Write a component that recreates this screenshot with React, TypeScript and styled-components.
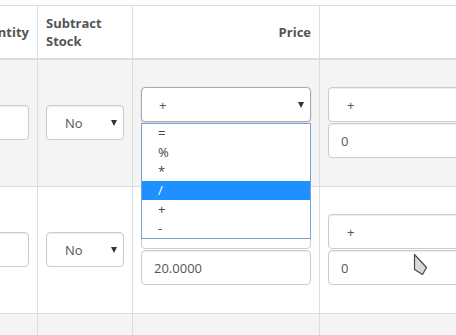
import React from "react";
import styled, { createGlobalStyle } from "styled-components";

const GlobalStyle = createGlobalStyle`
	html, body {
		margin: 0;
		padding: 0;
		background: #fff;
		overflow: hidden;
	}
	body {
		font-family: "Open Sans", "Liberation Sans", sans-serif;
		font-size: 13px;
		color: #555;
	}
`;

const operators = ["=", "%", "*", "/", "+", "-"];

interface OptionRow {
	subtract: string;
	pricePrefix: string;
	price: string;
	pointsPrefix: string;
	points: string;
}

const rows: OptionRow[] = [
	{ subtract: "No", pricePrefix: "+", price: "", pointsPrefix: "+", points: "0" },
	{ subtract: "No", pricePrefix: "+", price: "20.0000", pointsPrefix: "+", points: "0" },
	{ subtract: "No", pricePrefix: "+", price: "", pointsPrefix: "+", points: "0" },
];

const App = () => {
	return (
		<>
			<GlobalStyle />
			<Viewport>
				<Table>
					<colgroup>
						<col style={{ width: 97 }} />
						<col style={{ width: 95 }} />
						<col style={{ width: 187 }} />
						<col style={{ width: 200 }} />
						<col style={{ width: 200 }} />
					</colgroup>
					<thead>
						<tr>
							<HeadCell align="right">Quantity</HeadCell>
							<HeadCell align="left">
								Subtract
								<br />
								Stock
							</HeadCell>
							<HeadCell align="right">Price</HeadCell>
							<HeadCell align="right">Points</HeadCell>
							<HeadCell align="right">Weight</HeadCell>
						</tr>
					</thead>
					<tbody>
						{rows.map((row, i) => (
							<BodyRow key={i} striped={i % 2 === 0}>
								<Cell>
									<TextInput />
								</Cell>
								<Cell>
									<Select>
										<SelectValue indent={19}>{row.subtract}</SelectValue>
										<Caret />
									</Select>
								</Cell>
								<Cell>
									<Stack>
										<SelectWrap>
											<Select open={i === 0}>
												<SelectValue indent={18}>{row.pricePrefix}</SelectValue>
												<Caret />
											</Select>
											{i === 0 && (
												<Dropdown>
													{operators.map((op) => (
														<Option key={op} active={op === "/"}>
															{op}
														</Option>
													))}
												</Dropdown>
											)}
										</SelectWrap>
										<TextInput>{row.price}</TextInput>
									</Stack>
								</Cell>
								<Cell>
									<Stack>
										<Select>
											<SelectValue indent={19}>{row.pointsPrefix}</SelectValue>
											<Caret />
										</Select>
										<TextInput>{row.points}</TextInput>
									</Stack>
								</Cell>
								<Cell>
									<Stack>
										<Select>
											<SelectValue indent={19}>+</SelectValue>
											<Caret />
										</Select>
										<TextInput>0.00000000</TextInput>
									</Stack>
								</Cell>
							</BodyRow>
						))}
					</tbody>
				</Table>
				<Cursor width="16" height="24" viewBox="0 0 16 24">
					<path
						d="M1.5 1.5 L1.5 16.5 L9.5 21.5 L13.5 14.5 Z"
						fill="#d8d8d8"
						stroke="#4a4a4a"
						strokeWidth="1.2"
						strokeLinejoin="round"
					/>
				</Cursor>
			</Viewport>
		</>
	);
};

export default App;

const Viewport = styled.div`
	position: relative;
	width: 456px;
	height: 335px;
	overflow: hidden;
	padding-top: 5px;
	box-sizing: border-box;
`;

const Table = styled.table`
	table-layout: fixed;
	border-collapse: collapse;
	margin-left: -60px;
	width: 779px;
`;

const HeadCell = styled.th<{ align: "left" | "right" }>`
	text-align: ${({ align }) => align};
	vertical-align: middle;
	font-weight: 700;
	font-size: 13px;
	line-height: 18px;
	color: #555;
	height: 36px;
	padding: 8px;
	border: 1px solid #ddd;
	border-bottom: 2px solid #ddd;
	white-space: nowrap;
`;

const BodyRow = styled.tr<{ striped: boolean }>`
	background: ${({ striped }) => (striped ? "#f4f4f4" : "#fff")};
`;

const Cell = styled.td`
	vertical-align: middle;
	padding: 27px 8px 28px;
	border: 1px solid #ddd;
	height: 71px;
	box-sizing: content-box;
`;

const Stack = styled.div`
	display: flex;
	flex-direction: column;
	gap: 1px;
`;

const SelectWrap = styled.div`
	position: relative;
`;

const Select = styled.div<{ open?: boolean }>`
	position: relative;
	display: flex;
	align-items: center;
	height: 35px;
	box-sizing: border-box;
	background: #fff;
	border: 1px solid ${({ open }) => (open ? "#a9a9a9" : "#ccc")};
	border-radius: 4px;
	box-shadow: ${({ open }) =>
		open
			? "0 1px 2px rgba(0, 0, 0, 0.15)"
			: "inset 0 1px 1px rgba(0, 0, 0, 0.075)"};
	color: #555;
`;

const SelectValue = styled.span<{ indent: number }>`
	padding-left: ${({ indent }) => indent - 1}px;
	font-size: 13px;
`;

const Caret = styled.span`
	position: absolute;
	right: 6px;
	top: 50%;
	margin-top: -3px;
	width: 0;
	height: 0;
	border-left: 3.5px solid transparent;
	border-right: 3.5px solid transparent;
	border-top: 6px solid #333;
`;

const TextInput = styled.div`
	display: flex;
	align-items: center;
	height: 35px;
	box-sizing: border-box;
	padding: 0 12px;
	background: #fff;
	border: 1px solid #ccc;
	border-radius: 4px;
	box-shadow: inset 0 1px 1px rgba(0, 0, 0, 0.075);
	font-size: 13px;
	color: #555;
`;

const Dropdown = styled.ul`
	position: absolute;
	top: 100%;
	left: 0;
	right: 0;
	z-index: 2;
	margin: 1px 0 0;
	padding: 0;
	list-style: none;
	background: #fff;
	border: 1px solid #7d9fd8;
`;

const Option = styled.li<{ active: boolean }>`
	height: 19px;
	line-height: 19px;
	padding-left: 16px;
	font-size: 13px;
	color: ${({ active }) => (active ? "#fff" : "#444")};
	background: ${({ active }) => (active ? "#1e90ff" : "transparent")};
`;

const Cursor = styled.svg`
	position: absolute;
	left: 413px;
	top: 253px;
	z-index: 3;
`;
